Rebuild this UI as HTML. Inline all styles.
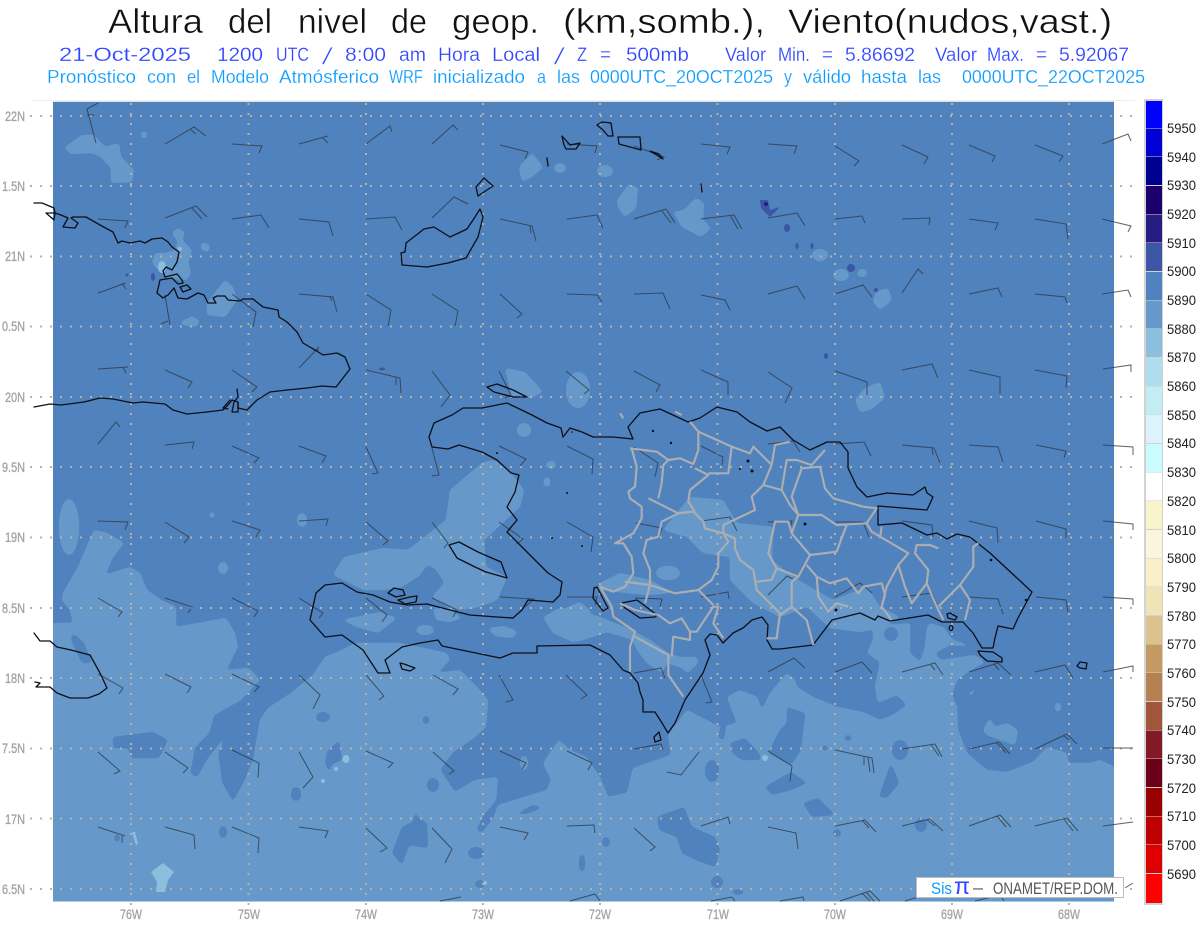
<!DOCTYPE html>
<html><head><meta charset="utf-8"><title>Altura del nivel de geop.</title>
<style>html,body{margin:0;padding:0;background:#fff}svg{display:block}text{font-family:"Liberation Sans",sans-serif}</style>
</head><body>
<svg xmlns="http://www.w3.org/2000/svg" width="1200" height="927" viewBox="0 0 1200 927">
<defs>
<clipPath id="pl"><rect x="53" y="102" width="1061" height="799"/></clipPath>
<filter id="sm" filterUnits="userSpaceOnUse" x="0" y="0" width="1200" height="927" color-interpolation-filters="sRGB">
<feGaussianBlur stdDeviation="1.8"/>
<feComponentTransfer><feFuncA type="linear" slope="9" intercept="-3.6"/></feComponentTransfer>
</filter>
</defs>
<rect width="1200" height="927" fill="#fff"/>
<!-- titles -->
<g font-size="34" fill="#111" stroke="#fff" stroke-width=".45">
<text x="108" y="33" textLength="95" lengthAdjust="spacingAndGlyphs">Altura</text>
<text x="228" y="33" textLength="44" lengthAdjust="spacingAndGlyphs">del</text>
<text x="298" y="33" textLength="69" lengthAdjust="spacingAndGlyphs">nivel</text>
<text x="391" y="33" textLength="36" lengthAdjust="spacingAndGlyphs">de</text>
<text x="452" y="33" textLength="87" lengthAdjust="spacingAndGlyphs">geop.</text>
<text x="563" y="33" textLength="202" lengthAdjust="spacingAndGlyphs">(km,somb.),</text>
<text x="788" y="33" textLength="324" lengthAdjust="spacingAndGlyphs">Viento(nudos,vast.)</text>
</g>
<g font-size="19" fill="#2f45ff" stroke="#fff" stroke-width=".2">
<text x="59" y="61" textLength="132" lengthAdjust="spacingAndGlyphs">21-Oct-2025</text>
<text x="217" y="61" textLength="46" lengthAdjust="spacingAndGlyphs">1200</text>
<text x="276" y="61" textLength="33" lengthAdjust="spacingAndGlyphs">UTC</text>
<text font-size="23" transform="translate(322 64) skewX(-14)">/</text>
<text x="345" y="61" textLength="41" lengthAdjust="spacingAndGlyphs">8:00</text>
<text x="399" y="61" textLength="27" lengthAdjust="spacingAndGlyphs">am</text>
<text x="438" y="61" textLength="42" lengthAdjust="spacingAndGlyphs">Hora</text>
<text x="492" y="61" textLength="48" lengthAdjust="spacingAndGlyphs">Local</text>
<text font-size="23" transform="translate(554 64) skewX(-14)">/</text>
<text x="577" y="61" textLength="10" lengthAdjust="spacingAndGlyphs">Z</text>
<text x="600" y="61" textLength="11" lengthAdjust="spacingAndGlyphs">=</text>
<text x="626" y="61" textLength="63" lengthAdjust="spacingAndGlyphs">500mb</text>
<text x="725" y="61" textLength="41" lengthAdjust="spacingAndGlyphs">Valor</text>
<text x="778" y="61" textLength="32" lengthAdjust="spacingAndGlyphs">Min.</text>
<text x="822" y="61" textLength="11" lengthAdjust="spacingAndGlyphs">=</text>
<text x="845" y="61" textLength="70" lengthAdjust="spacingAndGlyphs">5.86692</text>
<text x="935" y="61" textLength="42" lengthAdjust="spacingAndGlyphs">Valor</text>
<text x="987" y="61" textLength="37" lengthAdjust="spacingAndGlyphs">Max.</text>
<text x="1036" y="61" textLength="11" lengthAdjust="spacingAndGlyphs">=</text>
<text x="1059" y="61" textLength="70" lengthAdjust="spacingAndGlyphs">5.92067</text>
</g>
<g font-size="18" fill="#0a9bff" stroke="#fff" stroke-width=".2">
<text x="47" y="83" textLength="89" lengthAdjust="spacingAndGlyphs">Pronóstico</text>
<text x="147" y="83" textLength="29" lengthAdjust="spacingAndGlyphs">con</text>
<text x="187" y="83" textLength="13" lengthAdjust="spacingAndGlyphs">el</text>
<text x="211" y="83" textLength="58" lengthAdjust="spacingAndGlyphs">Modelo</text>
<text x="279" y="83" textLength="100" lengthAdjust="spacingAndGlyphs">Atmósferico</text>
<text x="389" y="83" textLength="34" lengthAdjust="spacingAndGlyphs">WRF</text>
<text x="433" y="83" textLength="92" lengthAdjust="spacingAndGlyphs">inicializado</text>
<text x="537" y="83" textLength="9" lengthAdjust="spacingAndGlyphs">a</text>
<text x="557" y="83" textLength="23" lengthAdjust="spacingAndGlyphs">las</text>
<text x="590" y="83" textLength="183" lengthAdjust="spacingAndGlyphs">0000UTC_20OCT2025</text>
<text x="784" y="83" textLength="8" lengthAdjust="spacingAndGlyphs">y</text>
<text x="803" y="83" textLength="48" lengthAdjust="spacingAndGlyphs">válido</text>
<text x="861" y="83" textLength="46" lengthAdjust="spacingAndGlyphs">hasta</text>
<text x="918" y="83" textLength="23" lengthAdjust="spacingAndGlyphs">las</text>
<text x="962" y="83" textLength="183" lengthAdjust="spacingAndGlyphs">0000UTC_22OCT2025</text>
</g>
<!-- top hairline -->
<rect x="32" y="100" width="1103" height="1" fill="#f0f0f0"/>
<rect x="53" y="101" width="1061" height="1" fill="#d8e4f0"/>
<!-- plot -->
<rect x="53" y="102" width="1061" height="799" fill="#5082bd"/>
<rect x="53" y="901" width="1061" height="1" fill="#a9cde6"/>
<g clip-path="url(#pl)">
<g fill="#6699c9" filter="url(#sm)">
<polygon points="40,915 40,625 57,623 73,623 70,610 62,600 63,593 78,567 94,530 107,533 124,543 113,557 105,575 130,567 140,573 147,590 161,600 176,607 176,627 226,618 235,633 238,647 226,670 249,668 260,680 241,700 214,715 209,733 195,747 190,773 197,778 207,760 228,732 218,753 222,783 233,802 245,780 253,760 260,720 268,708 291,693 313,675 325,657 342,650 355,643 400,643 447,653 450,660 437,673 460,670 477,687 488,700 486,727 475,737 452,753 440,770 455,792 475,780 498,777 496,800 482,817 476,830 482,833 494,817 498,805 547,790 551,780 543,763 559,740 570,750 586,757 600,777 608,797 627,793 633,768 671,755 668,735 687,710 720,727 737,723 727,697 740,690 757,697 762,710 770,693 787,673 795,680 797,687 813,697 837,707 863,712 880,720 893,715 907,705 897,695 885,700 878,703 875,687 880,662 867,653 873,640 873,627 910,623 910,653 920,662 925,647 927,627 930,623 943,627 953,640 975,647 950,645 935,653 940,660 975,655 985,662 968,672 957,680 952,695 957,707 958,730 967,753 987,770 1007,772 1033,762 1047,747 1067,753 1068,763 1090,763 1100,760 1125,772 1125,915"/>
<polygon points="333,575 344,557 383,548 408,550 446,520 450,490 482,463 494,460 511,473 524,490 520,507 509,517 484,540 486,567 507,577 497,600 475,608 453,610 432,597 444,583 436,570 417,577 402,587 383,590 364,590"/>
<polygon points="342,620 380,612 397,618 378,633 357,627"/>
<polygon points="433,608 450,610 462,618 450,622 436,620"/>
<ellipse cx="425" cy="630" rx="9" ry="5"/>
<polygon points="488,628 505,626 518,632 512,638 495,636"/>
<polygon points="543,617 560,608 577,610 600,617 627,628 650,640 668,653 680,657 697,657 698,663 688,673 680,667 667,663 662,673 647,663 637,650 633,640 607,632 583,640 573,642 553,633"/>
<polygon points="600,583 620,573 650,580 673,593 645,595 600,590"/>
<polygon points="566,608 580,602 592,612 575,616"/>
<polygon points="663,530 690,497 723,500 737,523 773,527 772,560 793,577 833,600 867,587 880,607 900,617 880,628 860,632 830,628 807,607 780,617 753,603 730,580 730,557 703,553 687,537"/>
<ellipse cx="668" cy="573" rx="12" ry="7"/>
<ellipse cx="69" cy="527" rx="10" ry="28"/>
<polygon points="64,148 82,135 94,135 105,147 119,143 121,157 134,170 132,182 111,183 111,168 101,157 92,153 71,154"/>
<ellipse cx="144" cy="135" rx="3.500" ry="3.500"/>
<polygon points="172,233 178,228 185,233 182,240 192,250 188,262 191,272 187,280 167,278 152,263 155,253 167,253 175,250 178,242"/>
<polygon points="202,242 210,245 208,253 200,248"/>
<polygon points="207,303 225,280 233,287 237,300 225,317 207,315"/>
<polygon points="180,322 193,316 200,322 195,327 183,325"/>
<polygon points="519,167 532,153 543,167 532,177 522,182"/>
<ellipse cx="560" cy="168" rx="6" ry="5"/>
<ellipse cx="605" cy="171" rx="8" ry="6"/>
<polygon points="617,200 629,184 638,188 636,208 625,217 618,207"/>
<polygon points="673,212 684,210 696,198 704,203 703,220 711,228 701,237 682,227"/>
<ellipse cx="820" cy="255" rx="8" ry="6"/>
<ellipse cx="841" cy="275" rx="8" ry="6"/>
<ellipse cx="862" cy="273" rx="5" ry="4"/>
<polygon points="876,292 888,288 892,300 880,310 873,302"/>
<polygon points="505,368 525,372 543,392 530,398 510,395 508,380"/>
<ellipse cx="578" cy="390" rx="12" ry="18"/>
<ellipse cx="524" cy="430" rx="7" ry="7"/>
<ellipse cx="551" cy="465" rx="5" ry="4"/>
<ellipse cx="547" cy="482" rx="3.500" ry="5"/>
<ellipse cx="302" cy="520" rx="5" ry="7"/>
<ellipse cx="223" cy="568" rx="5" ry="6"/>
<polygon points="880,382 885,398 870,410 860,412 855,400 865,388"/>
<ellipse cx="212" cy="515" rx="3" ry="3"/>
<polygon points="983,730 990,718 995,727 1007,723 1018,730 1015,745 1000,740 987,735"/>
<polygon points="965,697 980,684 972,695"/>
<ellipse cx="1058" cy="707" rx="3" ry="5"/>
</g>
<!-- dark patches over light -->
<g fill="#5082bd" filter="url(#sm)">
<polygon points="113,737 153,732 168,740 159,758 132,758 128,748 113,748"/>
<polygon points="339,740 342,760 332,764 329,772 325,763 327,752"/>
<ellipse cx="323" cy="717" rx="7" ry="5"/>
<ellipse cx="426" cy="720" rx="3.500" ry="4"/>
<ellipse cx="296" cy="794" rx="5" ry="7"/>
<ellipse cx="223" cy="832" rx="4" ry="6"/>
<ellipse cx="117" cy="838" rx="3" ry="4"/>
<polygon points="415,812 419,818 427,823 428,848 409,845 402,865 392,853 402,827 413,822"/>
<ellipse cx="433" cy="785" rx="6" ry="7"/>
<ellipse cx="476" cy="853" rx="8" ry="6"/>
<ellipse cx="480" cy="884" rx="5" ry="4"/>
<polygon points="515,815 532,805 543,807 530,813"/>
<ellipse cx="582" cy="863" rx="3" ry="9"/>
<polygon points="73,633 84,643 92,663 82,663 71,640"/>
<polygon points="722,720 726,725 724,740 718,738"/>
<polygon points="730,743 745,738 759,753 761,760 742,760 732,753"/>
<ellipse cx="712" cy="771" rx="7" ry="11"/>
<polygon points="765,787 791,772 807,783 791,790 772,795"/>
<polygon points="787,707 805,713 801,750 791,765 768,753 780,730 787,723"/>
<ellipse cx="900" cy="750" rx="8" ry="10"/>
<polygon points="891,763 899,783 887,798 879,797 885,780"/>
<polygon points="803,803 818,798 835,815 812,817"/>
<ellipse cx="837" cy="833" rx="4" ry="4"/>
<ellipse cx="921" cy="825" rx="6" ry="7"/>
<polygon points="657,817 684,807 692,827 715,837 720,850 715,867 696,860 682,853 677,837 659,830"/>
<ellipse cx="717" cy="882" rx="6" ry="6"/>
<ellipse cx="606" cy="842" rx="4" ry="5"/>
<ellipse cx="738" cy="892" rx="6" ry="3"/>
<ellipse cx="891" cy="634" rx="7" ry="7"/>
<polygon points="416,580 428,565 436,570 444,583 436,592 420,590"/>
<ellipse cx="848" cy="738" rx="4" ry="3"/>
<ellipse cx="825" cy="748" rx="3" ry="3"/>
</g>
</g>
<g fill="#6699c9">
<ellipse cx="524" cy="763" rx="4" ry="7"/>
</g>
<!-- deep & cyan patches -->
<g fill="#3b56a4">
<polygon points="760,200 768,200 770,210 780,207 770,217 761,208"/>
<ellipse cx="787" cy="228" rx="3" ry="4"/>
<ellipse cx="797" cy="246" rx="1.500" ry="3"/>
<ellipse cx="812" cy="246" rx="1.500" ry="3"/>
<ellipse cx="851" cy="268" rx="4" ry="4"/>
<ellipse cx="876" cy="290" rx="2" ry="2"/>
<ellipse cx="382" cy="369" rx="3" ry="1.500"/>
<ellipse cx="826" cy="356" rx="2" ry="3"/>
<ellipse cx="153" cy="277" rx="2" ry="4"/>
<ellipse cx="127" cy="275" rx="1.500" ry="1.500"/>
</g>
<circle cx="766" cy="204" r="2" fill="#261c82"/>
<g fill="#8cbfde">
<polygon points="151,872 163,863 174,872 168,880 165,892 156,892 157,882"/>
<ellipse cx="346" cy="759" rx="3.500" ry="4"/>
<ellipse cx="336" cy="769" rx="2" ry="2"/>
<ellipse cx="323" cy="781" rx="2" ry="2"/>
<polygon points="132,832 135,832 138,844 136,845"/>
<circle cx="765" cy="758" r="3"/>
<circle cx="485" cy="883" r="2"/>
<ellipse cx="162" cy="267" rx="4" ry="6"/>
<circle cx="180" cy="249" r="2"/>
</g>
<!-- graticule -->
<g stroke="#b9b2a4" stroke-width="2" stroke-dasharray="2 8" fill="none">
<path d="M30 116H1135M30 186H1135M30 256.500H1135M30 326.500H1135M30 397H1135M30 467H1135M30 537.500H1135M30 608H1135M30 678H1135M30 748.500H1135M30 818.500H1135M30 889H1135"/>
<path d="M131 103V905M248.500 103V905M366 103V905M483 103V905M600 103V905M717.500 103V905M835 103V905M952 103V905M1069 103V905"/>
</g>
<!-- barbs -->
<path fill="none" stroke="#2f3a4a" stroke-opacity=".8" stroke-width="1" d="
M96,143L87,109L98,103M87,115L94,115M165,144L194,127L206,136M190,129L196,134M232,144L262,146L259,153M299,144L328,136M323,138L328,143M366,144L390,126L392,132M432,144L453,125L458,130M500,145L528,152L525,159M567,144L597,146L595,153M634,146L664,157L657,160M701,144L730,147L727,154M768,144L797,146L794,154M835,146L859,161L854,166M902,145L928,157L924,164M969,145L995,156L992,162M1035,145L1063,156L1059,162M1102,144L1128,134L1131,141
M98,219L128,221L125,228M165,218L196,206L207,217M192,208L202,219M232,219L261,215L269,228M299,219L329,222L333,236M366,219L395,217L402,230M432,218L454,197L468,204M500,219L532,226L536,241M530,226L531,233M567,219L597,215L603,228M634,219L666,209L675,223M662,211L671,223M701,219L734,215L742,229M730,215L738,229M768,218L797,213L805,226M835,219L862,216L865,223M902,219L930,218L929,225M969,219L998,223L995,230M1035,219L1066,224L1068,239M1102,219L1131,226L1128,232
M98,293L126,283M122,283L126,289M165,295L170,325M161,324L168,321M232,294L256,312L253,327M299,294L333,297L337,312M330,297L332,301M366,294L391,310L388,326M432,294L458,311L455,326M500,294L522,314L517,318M567,294L597,295L602,302M634,294L663,293L670,309M701,295L725,300L730,310M768,294L797,286L805,299M835,294L863,285L872,297M902,293L918,269L923,274M969,294L998,288L1002,297M1035,294L1065,297L1067,303M1102,294L1128,290L1131,297
M98,369L128,367M123,367L126,373M165,370L192,382L188,388M232,370L257,387L252,392M299,368L319,347M313,350L319,350M366,370L400,378L401,393M396,377L396,385M432,371L450,395L441,407M499,371L511,395L505,398M566,371L589,390L584,394M634,371L660,385L656,392M701,370L728,382L728,395M768,372L792,388L785,403M835,371L867,382L867,395M902,370L932,364L938,378M969,370L1000,377L1000,394M1035,370L1067,376L1066,388M1103,369L1131,365L1131,372
M98,444L116,422L120,427M165,445L194,442L192,449M232,446L259,458L254,463M299,446L326,456L322,463M366,447L378,473L372,474M432,448L439,475L432,476M499,446L526,459L520,466M567,446L593,459L592,474M634,447L658,463L655,477M701,446L723,457L722,465M768,444L793,441L800,452M835,444L864,442L871,456M902,445L934,448L940,463M932,448L933,455M969,445L998,447L1003,462M1036,445L1066,451L1064,458M1103,445L1133,447L1133,455
M98,521L128,522L125,530M165,522L189,537L184,543M232,521L260,530L256,537M299,521L328,519L326,526M366,522L388,541L383,545M432,522L448,543L444,548M499,522L523,539L517,544M567,522L593,537L591,552M636,523L662,528L659,536M701,521L730,517L737,531M768,522L792,521L790,528M835,522L863,522L869,537M902,521L932,525L933,537M969,521L997,528L998,543M1036,521L1066,529L1066,538M1103,521L1133,524L1133,530
M98,598L122,612L118,617M165,598L192,607L188,613M232,598L258,611L254,617M299,598L323,613L319,618M366,598L387,615L382,622M432,598L457,610L453,617M500,597L534,599L525,607M567,597L597,597L595,605M635,598L662,599L660,607M701,597L728,592L729,599M768,595L787,576L793,579M835,597L860,583L872,593M902,597L932,593L938,607M969,597L998,599L1003,614M1036,597L1066,600L1068,612M1103,597L1133,599L1133,605
M98,674L123,688L119,694M165,674L191,687L187,693M232,674L259,687L254,692M299,675L320,695L313,709M366,675L384,696L379,700M433,675L458,689L453,695M499,675L513,700L506,702M566,675L587,695L581,699M634,673L661,668L665,678M701,675L712,702L706,703M768,672L794,658L805,668M835,672L862,662L872,673M902,672L935,663L943,675M930,664L935,670M969,672L998,663L1011,675M994,664L999,670M1035,672L1065,665L1073,678M1103,672L1133,666L1133,672
M98,752L120,771L114,774M165,752L188,768L183,773M232,750L259,763L258,778M299,752L313,777L303,788M366,751L393,763L388,768M433,752L454,771L449,774M500,751L526,763L522,769M567,751L592,763L588,770M634,749L661,744L663,750M699,752L681,775L667,772M768,751L792,766L790,781M835,750L872,758L874,773M868,757L870,772M864,757L864,765M902,749L935,744L942,757M931,745L939,756M969,749L999,742L1010,754M996,742L1006,753M1035,749L1067,734L1077,744M1063,735L1069,740M1103,748L1133,748
M98,827L125,836M122,836L122,843M165,827L194,835L195,849M232,827L259,838L258,853M299,827L328,831L325,838M366,828L387,848L380,852M432,828L452,849L445,863M500,827L528,833L524,840M567,826L594,825L595,833M634,828L655,847L650,851M701,826L728,817L730,824M768,827L796,833L798,849M835,826L865,820L876,832M862,820L869,828M902,826L930,819L943,831M927,820L935,826M969,826L1000,815L1011,827M997,816L1006,827M1035,826L1067,818L1078,831M1064,819L1073,831M1103,826L1133,822
M440,901L461,897M570,901L595,894L600,901M711,901L732,897L735,901M780,901L803,897L804,901M840,901L870,891L880,901M866,892L874,901M862,893L870,901M905,901L925,895M975,901L1000,895L1004,901M1125,888L1133,883"/>
<!-- coasts -->
<g fill="none" stroke="#0c0f18" stroke-width="1.300" stroke-linejoin="round" stroke-linecap="round">
<path d="M34,203L42,203L54,208L55,213L46,213L54,220L55,213L61,215L68,218L63,227L75,228L78,223L71,218L73,217L86,217L100,225L113,232L118,243L122,241L130,243L140,241L145,243L152,239L162,238L168,242L172,247L179,252L177,262L172,270L166,267L163,271L165,277L177,274L182,280L183,283L178,284L172,278L160,280L157,293L163,298L168,295L174,288L178,298L187,299L198,293L204,295L208,303L216,303L213,298L217,296L225,296L228,300L240,301L243,299L253,299L263,307L278,310L279,317L287,322L297,332L303,343L315,350L323,355L337,353L345,357L350,369L336,387L322,386L307,388L287,390L270,392L257,400L247,410L238,408L238,402L232,400L228,405L223,410L207,412L187,414L173,410L165,404L143,402L133,403L113,399L100,398L84,402L61,405L50,404L34,407"/>
<path d="M237,389L238,397L234,402L232,412L238,412L238,402M230,400L223,408L228,409"/>
<path d="M180,287L187,285L191,289L183,292Z"/>
<path d="M402,265L401,253L405,252L406,243L424,229L434,227L450,237L467,229L475,217L480,209L483,217L478,237L466,258L448,263L427,267Z"/>
<path d="M476,187L484,178L493,186L478,196Z"/>
<path d="M562,136L570,145L580,143L576,149L566,149L564,145Z"/>
<path d="M547,158L548,166"/>
<path d="M597,125L602,122L611,123L613,136L608,136L603,130Z"/>
<path d="M618,137L640,137L641,150L619,144Z"/>
<path d="M650,151L663,159L659,154Z"/>
<path d="M701,184L702,192"/>
<path d="M487,387L497,384L513,390L527,397L513,397L494,392Z"/>
<path d="M429,437L434,423L452,415L463,408L482,408L507,403L532,415L547,423L561,428L563,437L570,428L582,432L593,437L600,437L613,437L633,439L628,427L640,413L660,409L688,422L700,418L717,407L737,412L750,422L767,431L780,427L793,440L810,450L827,442L840,442L848,452L848,468L857,487L867,497L887,493L913,495L925,487L927,493L933,497L927,510L878,506L878,525L902,523L927,535L937,533L947,539L957,534L970,537L990,553L1032,592L1018,618L1013,629L998,626L995,638L993,648L982,648L973,633L963,622L942,622L928,615L890,621L878,616L875,620L860,613L832,620L813,645L780,649L772,649L767,640L768,625L762,617L752,620L743,628L733,633L723,643L717,635L710,634L705,640L710,655L703,673L685,700L675,723L668,733L662,723L655,712L643,712L643,700L640,692L638,683L630,673L623,670L610,655L590,645L537,646L537,653L513,653L500,658L442,646L438,640L420,643L402,647L385,660L390,673L378,673L363,650L342,635L325,637L310,620L316,593L325,585L342,583L357,592L373,595L390,602L407,605L427,604L450,610L470,615L497,617L513,618L522,610L528,600L553,602L560,595L562,582L548,573L528,553L507,532L517,520L507,507L515,492L519,475L511,473L497,460L482,452L459,445L448,449L432,447Z"/>
<path d="M449,545L459,542L478,552L501,562L507,578L486,572L475,567L457,558Z"/>
<path d="M388,593L394,588L403,590L405,595L396,597Z"/>
<path d="M398,600L410,597L417,596L416,602L405,604Z"/>
<path d="M400,663L404,664L415,668L410,671L402,669Z"/>
<path d="M978,651L993,652L1002,658L1002,662L987,661L980,655Z"/>
<path d="M1077,666L1080,662L1087,663L1086,669L1080,668Z"/>
<path d="M947,614L950,613L957,617L955,620L948,618Z"/>
<ellipse cx="951" cy="628" rx="1.800" ry="2.500"/>
<path d="M654,737L659,732L661,740L655,742Z"/>
<path d="M34,633L40,641L50,641L57,647L71,650L90,655L100,673L107,688L99,694L88,698L70,698L57,693L50,687L36,687L40,683L35,682"/>
<path d="M594,588L597,587L608,608L603,611L593,598Z"/>
<path d="M622,603L637,600L657,615L655,617L640,618L625,608Z"/>
</g>
<!-- provinces -->
<g transform="translate(580 390) scale(.33333)" fill="none" stroke="#aaaeb2" stroke-width="6.500" stroke-linejoin="round">
<path d="M155,175L170,230L165,290L145,305L150,325L185,350L185,385L160,430L105,460L130,460L155,500L160,550L135,590L100,605L60,590L95,650L100,680L165,725L150,770L150,845"/>
<path d="M165,740L265,795L265,855L310,920"/>
<path d="M275,800L280,740L330,750L330,725L350,725L400,650L415,650L400,700L430,745"/>
<path d="M135,575L210,585L285,610L355,600L400,645"/>
<path d="M195,640L210,585L210,540L190,490L200,450L235,440L245,395L295,370L330,365"/>
<path d="M120,640L165,660L235,675L270,700L305,685L330,725"/>
<path d="M205,325L295,370L340,365L370,395L375,415L430,430L465,445L465,475L480,510L520,540L530,600L600,670L590,745L560,745"/>
<path d="M235,325L245,280L250,225L265,210L300,205L340,222L355,180L355,125L330,95"/>
<path d="M150,175L190,180L230,185L265,210"/>
<path d="M345,235L385,255L330,300L325,335L345,365"/>
<path d="M355,125L455,170L510,190L520,170L550,200L575,225"/>
<path d="M455,170L445,250L385,250"/>
<path d="M575,225L550,285L515,320L525,360L430,405L430,430"/>
<path d="M430,430L445,455L415,490L415,530L395,570L355,600"/>
<path d="M575,225L585,165L630,155"/>
<path d="M550,285L605,300L620,210L650,210L695,225L735,180"/>
<path d="M605,300L630,345L655,375L725,375L770,405L860,400L890,355L850,350L760,325L735,295L720,230L665,235L635,320L655,375"/>
<path d="M655,375L635,430L690,495L770,485L800,405"/>
<path d="M690,495L655,560L590,535L565,490L585,395L625,395L635,430"/>
<path d="M590,535L575,570L530,575"/>
<path d="M655,560L635,575L635,650L600,675"/>
<path d="M635,650L680,690L700,765"/>
<path d="M680,525L710,560L750,580L800,565L835,610L850,590L905,580L915,615L905,650L935,690"/>
<path d="M710,560L715,620L745,665L770,640L805,650"/>
<path d="M860,400L875,425L985,490L955,525L920,590L905,650"/>
<path d="M955,525L975,590L995,640L1040,580L1045,540L1005,490L1010,465L1050,465L1075,475"/>
<path d="M1040,580L1075,660L1090,690"/>
<path d="M1075,650L1140,585L1170,630L1155,690"/>
<path d="M1140,585L1180,530L1180,470L1195,460"/>
<path d="M905,410L900,445"/>
<path d="M120,70L130,85M285,65L305,75"/>
</g>
<!-- black specks -->
<g fill="#0c0f18">
<circle cx="653" cy="431" r="1.200"/><circle cx="671" cy="443" r="1.200"/><circle cx="748" cy="461" r="1.500"/><circle cx="740" cy="469" r="1"/><circle cx="752" cy="471" r="1.500"/><circle cx="805" cy="524" r="1.500"/><circle cx="991" cy="560" r="1.300"/><circle cx="1026" cy="600" r="1.300"/><circle cx="836" cy="610" r="1.500"/><circle cx="572" cy="432" r=".8"/><circle cx="497" cy="453" r="1"/><circle cx="567" cy="493" r="1"/><circle cx="552" cy="538" r="1"/><circle cx="582" cy="546" r="1"/>
</g>
<!-- axis labels -->
<g font-size="14" fill="#a4a4a4" stroke="#a4a4a4" stroke-width=".35">
<text x="5" y="121" textLength="20" lengthAdjust="spacingAndGlyphs">22N</text>
<text x="2" y="191" textLength="23" lengthAdjust="spacingAndGlyphs">1.5N</text>
<text x="5" y="261" textLength="20" lengthAdjust="spacingAndGlyphs">21N</text>
<text x="2" y="331" textLength="23" lengthAdjust="spacingAndGlyphs">0.5N</text>
<text x="5" y="402" textLength="20" lengthAdjust="spacingAndGlyphs">20N</text>
<text x="2" y="472" textLength="23" lengthAdjust="spacingAndGlyphs">9.5N</text>
<text x="5" y="542" textLength="20" lengthAdjust="spacingAndGlyphs">19N</text>
<text x="2" y="613" textLength="23" lengthAdjust="spacingAndGlyphs">8.5N</text>
<text x="5" y="683" textLength="20" lengthAdjust="spacingAndGlyphs">18N</text>
<text x="2" y="753" textLength="23" lengthAdjust="spacingAndGlyphs">7.5N</text>
<text x="5" y="824" textLength="20" lengthAdjust="spacingAndGlyphs">17N</text>
<text x="2" y="894" textLength="23" lengthAdjust="spacingAndGlyphs">6.5N</text>
<text x="120" y="919" textLength="22" lengthAdjust="spacingAndGlyphs">76W</text>
<text x="238" y="919" textLength="22" lengthAdjust="spacingAndGlyphs">75W</text>
<text x="355" y="919" textLength="22" lengthAdjust="spacingAndGlyphs">74W</text>
<text x="472" y="919" textLength="22" lengthAdjust="spacingAndGlyphs">73W</text>
<text x="589" y="919" textLength="22" lengthAdjust="spacingAndGlyphs">72W</text>
<text x="707" y="919" textLength="22" lengthAdjust="spacingAndGlyphs">71W</text>
<text x="824" y="919" textLength="22" lengthAdjust="spacingAndGlyphs">70W</text>
<text x="941" y="919" textLength="22" lengthAdjust="spacingAndGlyphs">69W</text>
<text x="1058" y="919" textLength="22" lengthAdjust="spacingAndGlyphs">68W</text>
</g>
<!-- legend box -->
<rect x="916.500" y="877.500" width="207" height="20" fill="#fff" stroke="#bdbdbd"/>
<text x="931" y="894" font-size="17" fill="#0a9bff" textLength="21" lengthAdjust="spacingAndGlyphs">Sis</text>
<text x="954" y="894" font-size="23" fill="#2f45ff" textLength="16" lengthAdjust="spacingAndGlyphs">π</text>
<text x="973" y="893" font-size="17" fill="#555" textLength="10" lengthAdjust="spacingAndGlyphs">–</text>
<text x="993" y="894" font-size="17" fill="#555" textLength="125" lengthAdjust="spacingAndGlyphs">ONAMET/REP.DOM.</text>
<!-- colorbar -->
<rect x="1144" y="99" width="19" height="806" fill="#d2d2d2"/>
<g>
<rect x="1146" y="101" width="16" height="27" fill="#0000ff"/>
<rect x="1146" y="128.500" width="16" height="28" fill="#0000d4"/>
<rect x="1146" y="157" width="16" height="28" fill="#000090"/>
<rect x="1146" y="186" width="16" height="28" fill="#1b006b"/>
<rect x="1146" y="214.500" width="16" height="28" fill="#261c82"/>
<rect x="1146" y="243" width="16" height="28" fill="#3a56a4"/>
<rect x="1146" y="272" width="16" height="28" fill="#5082bd"/>
<rect x="1146" y="300.500" width="16" height="28" fill="#6699c9"/>
<rect x="1146" y="329" width="16" height="28" fill="#8cbfde"/>
<rect x="1146" y="358" width="16" height="28" fill="#b0dded"/>
<rect x="1146" y="386.500" width="16" height="28" fill="#c3ecf3"/>
<rect x="1146" y="415" width="16" height="28" fill="#dcf4f9"/>
<rect x="1146" y="444" width="16" height="28" fill="#c9fbff"/>
<rect x="1146" y="472.500" width="16" height="28" fill="#ffffff"/>
<rect x="1146" y="501" width="16" height="28" fill="#f9f3cb"/>
<rect x="1146" y="530" width="16" height="28" fill="#fbf5dd"/>
<rect x="1146" y="558.500" width="16" height="28" fill="#f8f0c8"/>
<rect x="1146" y="587" width="16" height="28" fill="#f0e3b6"/>
<rect x="1146" y="616" width="16" height="28" fill="#ddc28e"/>
<rect x="1146" y="644.500" width="16" height="28" fill="#c39a62"/>
<rect x="1146" y="673" width="16" height="28" fill="#b78050"/>
<rect x="1146" y="702" width="16" height="28" fill="#a15639"/>
<rect x="1146" y="730.500" width="16" height="28" fill="#831826"/>
<rect x="1146" y="759" width="16" height="28" fill="#6b0018"/>
<rect x="1146" y="788" width="16" height="28" fill="#990000"/>
<rect x="1146" y="816.500" width="16" height="28" fill="#bd0000"/>
<rect x="1146" y="845" width="16" height="28" fill="#de0000"/>
<rect x="1146" y="874" width="16" height="29" fill="#ff0000"/>
</g>
<g font-size="14" fill="#222">
<text x="1167" y="133" textLength="29" lengthAdjust="spacingAndGlyphs">5950</text>
<text x="1167" y="162" textLength="29" lengthAdjust="spacingAndGlyphs">5940</text>
<text x="1167" y="190" textLength="29" lengthAdjust="spacingAndGlyphs">5930</text>
<text x="1167" y="219" textLength="29" lengthAdjust="spacingAndGlyphs">5920</text>
<text x="1167" y="248" textLength="29" lengthAdjust="spacingAndGlyphs">5910</text>
<text x="1167" y="276" textLength="29" lengthAdjust="spacingAndGlyphs">5900</text>
<text x="1167" y="305" textLength="29" lengthAdjust="spacingAndGlyphs">5890</text>
<text x="1167" y="334" textLength="29" lengthAdjust="spacingAndGlyphs">5880</text>
<text x="1167" y="362" textLength="29" lengthAdjust="spacingAndGlyphs">5870</text>
<text x="1167" y="391" textLength="29" lengthAdjust="spacingAndGlyphs">5860</text>
<text x="1167" y="420" textLength="29" lengthAdjust="spacingAndGlyphs">5850</text>
<text x="1167" y="448" textLength="29" lengthAdjust="spacingAndGlyphs">5840</text>
<text x="1167" y="477" textLength="29" lengthAdjust="spacingAndGlyphs">5830</text>
<text x="1167" y="506" textLength="29" lengthAdjust="spacingAndGlyphs">5820</text>
<text x="1167" y="535" textLength="29" lengthAdjust="spacingAndGlyphs">5810</text>
<text x="1167" y="563" textLength="29" lengthAdjust="spacingAndGlyphs">5800</text>
<text x="1167" y="592" textLength="29" lengthAdjust="spacingAndGlyphs">5790</text>
<text x="1167" y="621" textLength="29" lengthAdjust="spacingAndGlyphs">5780</text>
<text x="1167" y="649" textLength="29" lengthAdjust="spacingAndGlyphs">5770</text>
<text x="1167" y="678" textLength="29" lengthAdjust="spacingAndGlyphs">5760</text>
<text x="1167" y="707" textLength="29" lengthAdjust="spacingAndGlyphs">5750</text>
<text x="1167" y="735" textLength="29" lengthAdjust="spacingAndGlyphs">5740</text>
<text x="1167" y="764" textLength="29" lengthAdjust="spacingAndGlyphs">5730</text>
<text x="1167" y="793" textLength="29" lengthAdjust="spacingAndGlyphs">5720</text>
<text x="1167" y="821" textLength="29" lengthAdjust="spacingAndGlyphs">5710</text>
<text x="1167" y="850" textLength="29" lengthAdjust="spacingAndGlyphs">5700</text>
<text x="1167" y="879" textLength="29" lengthAdjust="spacingAndGlyphs">5690</text>
</g>
</svg>
</body></html>
